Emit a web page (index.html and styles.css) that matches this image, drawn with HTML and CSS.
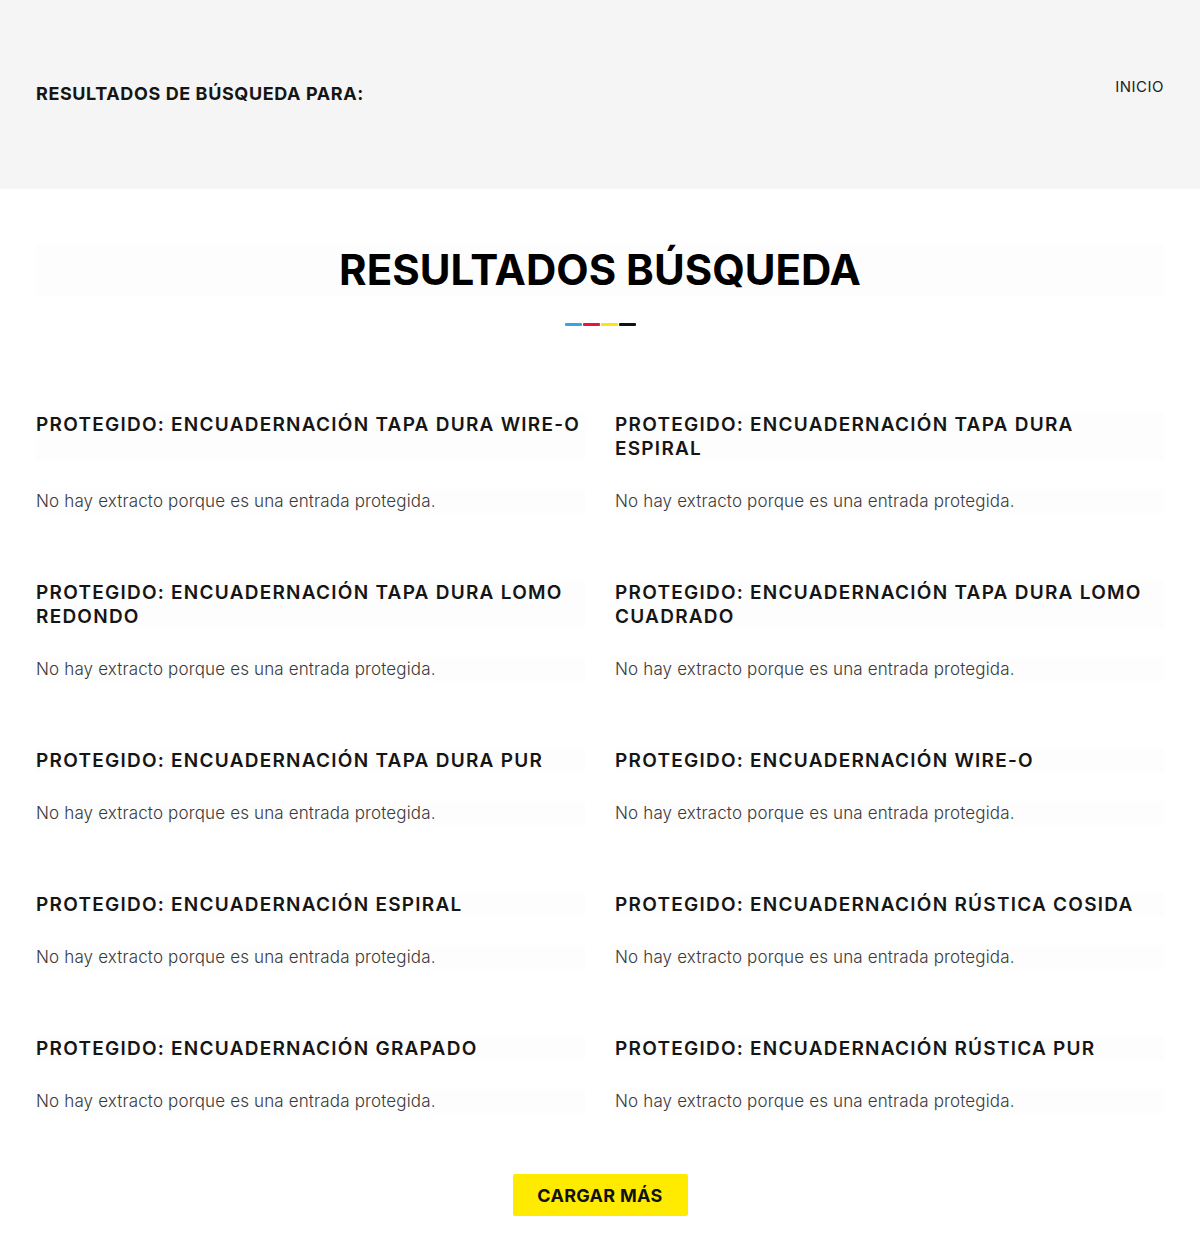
FILE: index.html
```html
<!DOCTYPE html>
<html lang="es">
<head>
<meta charset="utf-8">
<title>Resultados búsqueda</title>
<link rel="stylesheet" href="styles.css">
</head>
<body>
<header class="page-head">
  <h1 class="page-head__title">RESULTADOS DE BÚSQUEDA PARA:</h1>
  <nav class="crumbs"><a class="crumbs__link" href="#">INICIO</a></nav>
</header>
<main class="content">
  <h2 class="section-title">RESULTADOS BÚSQUEDA</h2>
  <div class="cmyk-bar"><span class="cmyk-bar__c"></span><span class="cmyk-bar__m"></span><span class="cmyk-bar__y"></span><span class="cmyk-bar__k"></span></div>
  <div class="results">
    <article class="result"><h3 class="result__title">PROTEGIDO: ENCUADERNACIÓN TAPA DURA WIRE-O</h3><p class="result__excerpt">No hay extracto porque es una entrada protegida.</p></article>
    <article class="result"><h3 class="result__title">PROTEGIDO: ENCUADERNACIÓN TAPA DURA ESPIRAL</h3><p class="result__excerpt">No hay extracto porque es una entrada protegida.</p></article>
    <article class="result"><h3 class="result__title">PROTEGIDO: ENCUADERNACIÓN TAPA DURA LOMO REDONDO</h3><p class="result__excerpt">No hay extracto porque es una entrada protegida.</p></article>
    <article class="result"><h3 class="result__title">PROTEGIDO: ENCUADERNACIÓN TAPA DURA LOMO CUADRADO</h3><p class="result__excerpt">No hay extracto porque es una entrada protegida.</p></article>
    <article class="result"><h3 class="result__title">PROTEGIDO: ENCUADERNACIÓN TAPA DURA PUR</h3><p class="result__excerpt">No hay extracto porque es una entrada protegida.</p></article>
    <article class="result"><h3 class="result__title">PROTEGIDO: ENCUADERNACIÓN WIRE-O</h3><p class="result__excerpt">No hay extracto porque es una entrada protegida.</p></article>
    <article class="result"><h3 class="result__title">PROTEGIDO: ENCUADERNACIÓN ESPIRAL</h3><p class="result__excerpt">No hay extracto porque es una entrada protegida.</p></article>
    <article class="result"><h3 class="result__title">PROTEGIDO: ENCUADERNACIÓN RÚSTICA COSIDA</h3><p class="result__excerpt">No hay extracto porque es una entrada protegida.</p></article>
    <article class="result result--last"><h3 class="result__title">PROTEGIDO: ENCUADERNACIÓN GRAPADO</h3><p class="result__excerpt">No hay extracto porque es una entrada protegida.</p></article>
    <article class="result result--last"><h3 class="result__title">PROTEGIDO: ENCUADERNACIÓN RÚSTICA PUR</h3><p class="result__excerpt">No hay extracto porque es una entrada protegida.</p></article>
  </div>
  <div class="more"><button class="more__btn" type="button">CARGAR MÁS</button></div>
</main>
</body>
</html>
```

FILE: styles.css
```css
* { box-sizing: border-box; }
html, body { margin: 0; padding: 0; background: #fff; }
body {
  font-family: Inter, "Noto Sans", "Liberation Sans", sans-serif;
  color: #111;
  width: 1200px;
}
.page-head {
  background: #f5f5f5;
  height: 189px;
  padding: 76px 36px 0;
  display: flex;
  justify-content: space-between;
  align-items: flex-start;
}
.page-head__title {
  margin: 6px 0 0;
  font-size: 18px;
  line-height: 24px;
  font-weight: 700;
  color: #151515;
  letter-spacing: 0.6px;
}
.crumbs__link {
  font-size: 15px;
  line-height: 20px;
  color: #222;
  text-decoration: none;
  font-weight: 400;
  letter-spacing: 0.5px;
}
.content { padding: 0 36px 38px; }
.section-title {
  margin: 55px 0 0;
  text-align: center;
  font-size: 42px;
  line-height: 52px;
  font-weight: 700;
  color: #000;
  background: #fdfdfd;
}
.cmyk-bar {
  margin: 27px auto 0;
  display: flex;
  gap: 1px;
  width: 71px;
}
.cmyk-bar span { display: block; width: 17px; height: 3px; border-radius: 1px; }
.cmyk-bar__c { background: #2eaae1; }
.cmyk-bar__m { background: #e4173e; }
.cmyk-bar__y { background: #ffe500; }
.cmyk-bar__k { background: #111; }
.results {
  margin-top: 87px;
  display: grid;
  grid-template-columns: 549px 549px;
  column-gap: 30px;
}
.result {
  display: grid;
  grid-row: span 2;
  grid-template-rows: subgrid;
}
.result__title {
  margin: 0 0 28px;
  font-size: 19px;
  line-height: 24px;
  font-weight: 600;
  color: #151515;
  letter-spacing: 1.25px;
  background: #fdfdfd;
}
.result__excerpt {
  margin: 0 0 68px;
  font-size: 17px;
  line-height: 24px;
  font-weight: 300;
  color: #3a3a3a;
  letter-spacing: 0.15px;
  background: #fdfdfd;
}
.result--last .result__excerpt { margin-bottom: 61px; }
.more { display: flex; justify-content: center; }
.more__btn {
  width: 175px;
  height: 42px;
  border: 0;
  border-radius: 2px;
  background: #ffeb00;
  font-family: inherit;
  font-size: 18px;
  font-weight: 700;
  color: #111;
  letter-spacing: 0.3px;
  cursor: pointer;
}
```
